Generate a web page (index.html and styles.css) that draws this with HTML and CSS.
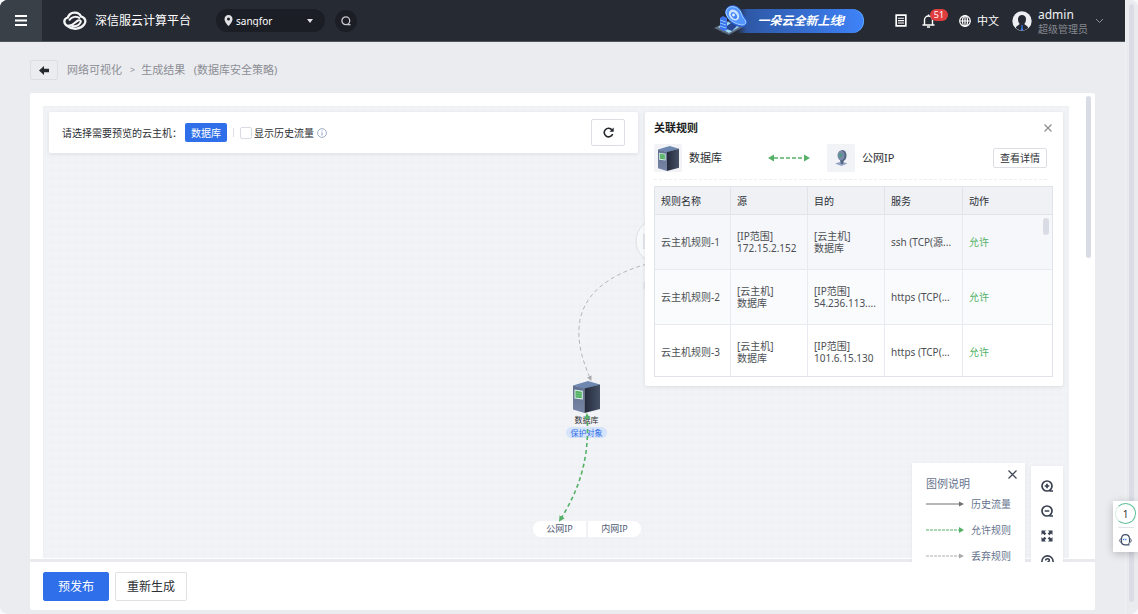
FILE: index.html
```html
<!DOCTYPE html>
<html lang="zh-CN">
<head>
<meta charset="utf-8">
<title>深信服云计算平台</title>
<link rel="stylesheet" href="styles.css">
</head>
<body>
<svg class="defs" aria-hidden="true">
  <defs>
    <linearGradient id="side" x1="0" y1="0" x2="1" y2="0"><stop offset="0" stop-color="#232a3b"/><stop offset="1" stop-color="#465166"/></linearGradient>
    <linearGradient id="front" x1="0" y1="0" x2="0" y2="1"><stop offset="0" stop-color="#62708f"/><stop offset="1" stop-color="#7785a6"/></linearGradient>
    <symbol id="server" viewBox="0 0 27 32">
      <path d="M0 4.500 15 0 27 3.500 11.500 8z" fill="#6e87b0"/>
      <path d="M0 4.500 11.500 7.500V32L0 28.500z" fill="url(#front)"/>
      <path d="M11.500 7.500 27 3.500V28L11.500 32z" fill="url(#side)"/>
      <path d="M1.500 8.500 9.800 9.800V18.500L1.500 17.500z" fill="#d9efe4"/>
      <path d="M2.500 9.800 8.800 10.800V17.200L2.500 16.400z" fill="#4fae62"/>
      <path d="M2.500 12l6.300.8M2.500 14.300l6.300.8" stroke="#8bd297" stroke-width=".6"/>
    </symbol>
  </defs>
</svg>
<div class="app">
  <div class="page">
    <header class="topbar">
      <button class="menu" aria-label="菜单"><svg width="12" height="11" viewBox="0 0 12 11"><path d="M0 1h12M0 5.500h12M0 10h12" stroke="#fff" stroke-width="1.900"/></svg></button>
      <div class="brand">
        <svg width="24" height="20" viewBox="0 0 24 20" fill="none">
          <path d="M4.500 15C0 12.500.5 7.500 4.800 6.500 7 .5 15.500 0 18 5.500c4.500 1 5.500 5 3 8.200C18 18 10 19.500 4.500 15z" stroke="#f4f5f7" stroke-width="2.300"/>
          <path d="M5 14.500c5 1 7-3.500 10-5 2-1 3.500.5 2.500 2-2 3.500-6 4-9 3.500M6 9.500c3-4.500 8-4.500 11-2" stroke="#f4f5f7" stroke-width="2"/>
        </svg>
        <span>深信服云计算平台</span>
      </div>
      <div class="region">
        <svg width="9" height="11" viewBox="0 0 9 11"><path d="M4.500 0A4 4 0 0 0 .5 4.200C.5 7 4.500 11 4.500 11s4-4 4-6.800A4 4 0 0 0 4.500 0zm0 2.600a1.500 1.500 0 1 1 0 3 1.500 1.500 0 0 1 0-3z" fill="#dfe1e4" fill-rule="evenodd"/></svg>
        <select aria-label="区域"><option>sangfor</option></select>
        <svg width="6" height="4" viewBox="0 0 6 4"><path d="M0 0h6L3 4z" fill="#dfe1e4"/></svg>
      </div>
      <button class="search" aria-label="搜索"><svg width="10" height="10" viewBox="0 0 10 10" fill="none" stroke="#c9cbcf" stroke-width="1.300"><circle cx="4.800" cy="4.800" r="3.900"/><path d="M6.500 8.700h3"/></svg></button>
      <a class="banner" href="#">
        <svg width="34" height="31" viewBox="0 0 34 31">
          <path d="M0 23 14 16l15 6-14 8z" fill="#5c6b80"/><path d="M4 22 14 17l11 5-10 6z" fill="#9edcf5"/>
          <path d="M10 23l11-8 6 2-9 9z" fill="#284894"/>
          <path d="M6 13l3-2 4 2v12l-3 1-4-2z" fill="#3d73ed"/><path d="M6 15l6 2M6 18l6 2M6 21l6 2" stroke="#8bc4fb"/>
          <path d="M11 8C11 1 19-2 24 2c4 3 4 8 8 11 2 3 1 8-2 9-7 1-16-5-19-14z" fill="#2b63dd"/>
          <path d="M12 8c0-6 6-8 11-5 5 3 4 8 8 12 2 3 0 5-3 5-8-1-15-6-16-12z" fill="#5595ff" stroke="#a5d4ff"/>
          <ellipse cx="20" cy="10" rx="4.500" ry="6" fill="#cfe5ff" transform="rotate(-40 20 10)"/><ellipse cx="20" cy="10.500" rx="2.500" ry="3.800" fill="#4384f6" transform="rotate(-40 20 10.500)"/><circle cx="19.500" cy="10" r="1.400" fill="#e8f4ff"/>
        </svg>
        <span>一朵云全新上线!</span>
      </a>
      <button class="plain" aria-label="任务"><svg width="12" height="13" viewBox="0 0 12 13" fill="none" stroke="#fff"><path d="M1.200 1.200h9.600v10.600H1.200z" stroke-width="1.700"/><path d="M3 4.200h6M3 6.600h6M3 9h6" stroke-width="1.100"/></svg></button>
      <button class="plain bell" aria-label="通知"><svg width="13" height="14" viewBox="0 0 13 14" fill="none" stroke="#fff" stroke-width="1.400"><path d="M.5 11h12M2.500 11V6a4 4 0 0 1 8 0v5M6.500 2V.5M5 13h3"/></svg><span class="badge">51</span></button>
      <button class="plain lang"><svg width="12" height="12" viewBox="0 0 12 12" fill="none" stroke="#fff" stroke-width="1.200"><circle cx="6" cy="6" r="5.300"/><ellipse cx="6" cy="6" rx="2.500" ry="5.300"/><path d="M.7 6h10.600M6 .7v10.600"/></svg>中文</button>
      <button class="plain user">
        <svg width="20" height="20" viewBox="0 0 20 20"><circle cx="10" cy="10" r="9.700" fill="#edeff2"/><path d="M6 8c0-5.500 8-5.500 8 0 0 2.500-.7 4-1.800 5l3.300 2.500c1 .8.500 1.800-.5 2.400-3 1.800-7 1.800-10 0-1-.6-1.500-1.600-.5-2.400L7.800 13C6.700 12 6 10.500 6 8z" fill="#252a35"/><path d="M9.200 14h1.600l-.4 1.500.8 4H8.800l.8-4z" fill="#377cf5"/></svg>
        <span class="who"><b>admin</b><span>超级管理员</span></span>
        <svg width="9" height="6" viewBox="0 0 9 6"><path d="M1 1l3.500 3.500L8 1" fill="none" stroke="#8d9197"/></svg>
      </button>
    </header>

    <nav class="crumbs">
      <button class="back" aria-label="返回"><svg width="11" height="9" viewBox="0 0 11 9"><path d="M0 4.500 5 0v2.700h5v3.600H5V9z" fill="#25282c"/></svg></button>
      <a href="#">网络可视化</a><i>&gt;</i><span>生成结果&nbsp;&nbsp; (数据库安全策略)</span>
    </nav>

    <main class="work">
      <section class="canvas">
        <svg class="edges" aria-hidden="true">
          <defs>
            <marker id="g" viewBox="0 0 6 6" refX="4" refY="3" markerWidth="6" markerHeight="6" markerUnits="userSpaceOnUse" orient="auto-start-reverse"><path d="M0 0l6 3-6 3z" fill="#55b168"/></marker>
            <marker id="s" viewBox="0 0 5 5" refX="4" refY="2.500" markerWidth="5" markerHeight="5" markerUnits="userSpaceOnUse" orient="auto-start-reverse"><path d="M0 0l5 2.500L0 5z" fill="#a9abb0"/></marker>
          </defs>
          <circle cx="615" cy="135" r="22" fill="#f8f9fb" stroke="#dddfe4"/>
          <path d="M601 128v15M601 176v7" stroke="#e3e5ea" stroke-width="2"/>
          <path d="M604 158C526 180 527 228 548 274" fill="none" stroke="#b4b6bb" stroke-dasharray="4 3" marker-end="url(#s)"/>
        </svg>
        <div class="node">
          <svg width="27" height="32"><use href="#server"/></svg>
          <span>数据库</span><em>保护对象</em>
        </div>
        <div class="ends"><span>公网IP</span><span>内网IP</span></div>
        <svg class="edges" aria-hidden="true"><path d="M544 309C547 350 537 383 517 414" fill="none" stroke="#55b168" stroke-width="1.600" stroke-dasharray="4 3" marker-start="url(#g)" marker-end="url(#g)"/></svg>

        <div class="filter">
          <span>请选择需要预览的云主机：</span>
          <button class="tag">数据库</button>
          <i class="rule"></i>
          <input type="checkbox" id="history"><label for="history">显示历史流量</label>
          <svg width="10" height="10" viewBox="0 0 10 10" fill="none" stroke="#a1adc5"><circle cx="5" cy="5" r="4.400"/><path d="M5 4.200v3.300M5 2.200v1.100" stroke-width="1.200"/></svg>
          <button class="refresh" aria-label="刷新"><svg width="11" height="11" viewBox="0 0 11 11" fill="none" stroke="#24272c" stroke-width="1.600"><path d="M9 3A4.300 4.300 0 1 0 9.600 7"/><path d="M10.700.5v4.200H6.500z" fill="#24272c" stroke="none"/></svg></button>
        </div>

        <aside class="panel">
          <div class="panel-head"><h2>关联规则</h2><button class="plain" aria-label="关闭"><svg width="8" height="8" viewBox="0 0 8 8"><path d="M.5.5l7 7M7.500.5l-7 7" stroke="#8b8e94" stroke-width="1.200"/></svg></button></div>
          <div class="pair">
            <span class="thumb"><svg width="21" height="25"><use href="#server"/></svg></span><span class="from">数据库</span>
            <svg class="arrow" width="42" height="8" viewBox="0 0 42 8"><path d="M6 4h30" stroke="#55b168" stroke-width="1.300" stroke-dasharray="4 2"/><path d="M0 4l6-3.500v7zM42 4l-6-3.500v7z" fill="#55b168"/></svg>
            <span class="thumb"><svg width="13" height="16" viewBox="0 0 13 16"><path d="M0 13.500l6.500-2 6 2-6 2.500z" fill="#93a4c4"/><ellipse cx="7.500" cy="5.500" rx="4" ry="5.500" fill="#566784"/><path d="M5 10h4l-1 4H6z" fill="#566784"/><ellipse cx="6" cy="5.500" rx="3.500" ry="4.800" fill="#798ba9"/><circle cx="5.500" cy="5.200" r="1.800" fill="#4d9b83"/></svg></span><span>公网IP</span>
            <button class="detail">查看详情</button>
          </div>
          <div class="grid-wrap">
            <table>
              <colgroup><col class="c1"><col class="c2"><col class="c2"><col class="c3"><col></colgroup>
              <thead><tr><th>规则名称</th><th>源</th><th>目的</th><th>服务</th><th>动作</th></tr></thead>
              <tbody>
                <tr class="hover"><td>云主机规则-1</td><td>[IP范围]<br>172.15.2.152</td><td>[云主机]<br>数据库</td><td>ssh (TCP(源...</td><td class="ok">允许</td></tr>
                <tr class="alt"><td>云主机规则-2</td><td>[云主机]<br>数据库</td><td>[IP范围]<br>54.236.113....</td><td>https (TCP(...</td><td class="ok">允许</td></tr>
                <tr><td>云主机规则-3</td><td>[云主机]<br>数据库</td><td>[IP范围]<br>101.6.15.130</td><td>https (TCP(...</td><td class="ok">允许</td></tr>
              </tbody>
            </table>
            <i class="thumb-bar"></i>
          </div>
        </aside>
      </section>

      <div class="corner">
        <section class="legend">
          <header><h3>图例说明</h3><button class="plain" aria-label="关闭图例"><svg width="9" height="9" viewBox="0 0 9 9"><path d="M.5.5l8 8M8.500.5l-8 8" stroke="#3f4654" stroke-width="1.200"/></svg></button></header>
          <p><svg width="38" height="6" viewBox="0 0 38 6"><path d="M0 3h34" stroke="#6d7075"/><path d="M33 .5 38 3l-5 2.500z" fill="#6d7075"/></svg>历史流量</p>
          <p><svg width="38" height="6" viewBox="0 0 38 6"><path d="M0 3h33" stroke="#55b168" stroke-dasharray="3 1"/><path d="M33 0 38 3l-5 3z" fill="#55b168"/></svg>允许规则</p>
          <p><svg width="38" height="6" viewBox="0 0 38 6"><path d="M0 3h33" stroke="#aaacb0" stroke-dasharray="3 1"/><path d="M33 .5 38 3l-5 2.500z" fill="#aaacb0"/></svg>丢弃规则</p>
        </section>
        <div class="tools">
          <button class="plain" aria-label="放大"><svg width="12" height="12" viewBox="0 0 12 12" fill="none" stroke="#394150" stroke-width="1.700"><circle cx="6" cy="6" r="5"/><path d="M8.500 11H12M3.700 6h4.600M6 3.700v4.600"/></svg></button>
          <button class="plain" aria-label="缩小"><svg width="12" height="12" viewBox="0 0 12 12" fill="none" stroke="#394150" stroke-width="1.700"><circle cx="6" cy="6" r="5"/><path d="M8.500 11H12M3.700 6h4.600"/></svg></button>
          <button class="plain" aria-label="全屏"><svg width="12" height="12" viewBox="0 0 12 12"><path d="M.5.5H5L3.600 1.900 5.300 3.600 3.600 5.300 1.900 3.600.5 5zM11.500.5V5l-1.400-1.400-1.700 1.700-1.700-1.700 1.700-1.700L7 .5zM.5 11.500V7l1.400 1.400 1.700-1.700 1.700 1.700-1.700 1.700L5 11.500zM11.500 11.500H7l1.400-1.400-1.700-1.700 1.700-1.700 1.700 1.700L11.500 7z" fill="#394150"/></svg></button>
          <button class="plain" aria-label="帮助"><svg width="13" height="13" viewBox="0 0 13 13" fill="none" stroke="#394150" stroke-width="1.600"><circle cx="6.500" cy="6.500" r="5.600"/><path d="M4.700 5.500c0-2.500 3.800-2.300 3.600 0C8.200 6.800 6.500 6.600 6.500 8"/></svg></button>
        </div>
      </div>
      <i class="inner-scroll"></i>
    </main>

    <footer class="actions"><button class="primary">预发布</button><button>重新生成</button></footer>
  </div>
  <div class="outer-scroll"><i></i></div>
  <div class="assist">
    <button class="ring">1</button>
    <button class="plain" aria-label="客服"><svg width="13" height="12" viewBox="0 0 13 12" fill="none" stroke="#42506b"><path d="M2.500 4.500C3-.7 10-.7 10.500 4.500M2.500 4.500v4M10.500 4.500v4M2.500 8.500C3 10 4 10.800 6 10.800h4.500" stroke-width="1.200"/><path d="M2.500 4.500C.2 4.500.2 8.500 2.500 8.500M10.500 4.500c2.300 0 2.300 4 0 4M10.500 8.500 9 10.800"/><path d="M4 5.500h1.300M6.200 5.500h1.300" stroke="#3c7bf0" stroke-width="1.600"/></svg></button>
  </div>
</div>
</body>
</html>
```

FILE: styles.css
```css
* { box-sizing: border-box; }
body {
  margin: 0;
  background: #f8f9fa;
  color: #2d3035;
  font: 10px/12px "Noto Sans", "Noto Sans CJK SC", sans-serif;
}
svg { display: block; flex: none; }
button, input, select { font: inherit; color: inherit; margin: 0; }
button { padding: 0; border: 0; background: none; white-space: nowrap; }
a { color: inherit; text-decoration: none; }
h2, h3, p { margin: 0; }
.defs { position: absolute; width: 0; height: 0; }
.app {
  position: relative;
  display: flex;
  height: 100vh;
  overflow: hidden;
  border-radius: 8px;
  background: #ebecf0;
}
.page { flex: 1; min-width: 0; display: flex; flex-direction: column; }
.plain { display: flex; align-items: center; justify-content: center; }

.topbar {
  flex: none;
  display: flex;
  align-items: center;
  height: 42px;
  padding-right: 21px;
  background: #262a33;
  border-bottom: 1px solid #50545b;
  color: #fff;
}
.menu { display: flex; align-items: center; justify-content: center; width: 42px; align-self: stretch; background: #3a4047; }
.brand { display: flex; align-items: center; gap: 8px; margin-left: 21px; font-size: 12px; white-space: nowrap; }
.region {
  display: flex;
  align-items: center;
  gap: 3px;
  width: 109px;
  height: 23px;
  margin-left: 25px;
  padding: 0 12px 0 8px;
  border-radius: 12px;
  background: #1b1e25;
}
.region select { flex: 1; min-width: 0; height: 20px; padding: 0; border: 0; background: none; appearance: none; color: #fff; }
.search { display: flex; align-items: center; justify-content: center; width: 22px; height: 22px; margin-left: 10px; border-radius: 50%; background: #1b1e25; }
.banner {
  display: flex;
  align-items: center;
  height: 24px;
  margin-left: auto;
  margin-right: 31px;
  padding-right: 19px;
  border-radius: 12px;
  background: linear-gradient(90deg, #262a33 15%, #2e58a6 22%, #3e83fa);
  box-shadow: inset -1px 0 0 #59a5fa;
  font-size: 12px;
  font-weight: 700;
  font-style: italic;
  white-space: nowrap;
}
.banner svg { margin-right: 10px; }
.bell { position: relative; margin-left: 15px; }
.badge { position: absolute; left: 8px; top: -5px; width: 18px; height: 12px; border-radius: 6px; background: #e03d3f; font-size: 9px; text-align: center; }
.lang { gap: 6px; margin-left: 24px; font-size: 11px; }
.user { gap: 6px; margin-left: 13px; text-align: left; }
.who { display: flex; flex-direction: column; margin-right: 1px; padding-top: 2px; line-height: 14px; color: #85888e; }
.who b { font-size: 12px; font-weight: 400; color: #f0f1f3; }

.crumbs { flex: none; display: flex; align-items: center; height: 51px; padding: 5px 0 0 30px; color: #8b8e94; font-size: 11px; }
.crumbs i { margin: 0 6px 0 8px; font-style: normal; font-size: 9px; }
.back { display: flex; align-items: center; justify-content: center; width: 28px; height: 20px; margin-right: 9px; border: 1px solid #dbdde2; border-radius: 2px; }

.work {
  position: relative;
  flex: 1;
  min-height: 0;
  overflow: hidden;
  display: flex;
  margin: 0 30px 0 30px;
  padding: 13px 26px 4px 13px;
  border-radius: 2px 2px 0 0;
  background: linear-gradient(#fff, #fff) top / 100% calc(100% - 3px) no-repeat, #e8eaee;
}
.canvas {
  position: relative;
  flex: 1;
  min-width: 0;
  overflow: hidden;
  display: flex;
  align-items: flex-start;
  gap: 7px;
  padding: 6px;
  background: linear-gradient(#eff0f4 1px, transparent 1px) 0 0 / 8px 8px, linear-gradient(90deg, #eff0f4 1px, #f2f3f7 1px) 0 0 / 8px 8px;
}
.edges { position: absolute; left: 0; top: 0; width: 100%; height: 100%; }
.node { position: absolute; left: 523px; top: 275px; display: flex; flex-direction: column; align-items: center; width: 41px; font-size: 8px; }
.node span { margin: 1px 0; }
.node em { width: 41px; border-radius: 6px; background: #d5e4fb; color: #2f6fe9; font-style: normal; line-height: 11px; text-align: center; }
.ends { position: absolute; left: 490px; top: 415px; display: flex; gap: 2px; color: #535d75; font-size: 9px; line-height: 16px; text-align: center; }
.ends span { width: 53px; background: #fff; border-radius: 8px 0 0 8px; }
.ends span + span { border-radius: 0 8px 8px 0; }

.filter {
  position: relative;
  flex: 1;
  display: flex;
  align-items: center;
  height: 41px;
  padding: 0 13px 0 13px;
  background: #fff;
  border-radius: 2px;
  box-shadow: 0 1px 4px #00000014;
  white-space: nowrap;
}
.tag { height: 19px; padding: 0 6px; margin-left: 3px; border-radius: 2px; background: #2f6fe9; color: #fff; }
.rule { width: 1px; height: 9px; margin: 0 6px; background: #dcdfe5; }
.filter input { width: 12px; height: 12px; margin-right: 2px; appearance: none; border: 1px solid #d8dbe2; border-radius: 2px; background: #fff; }
.filter label { margin-right: 3px; }
.refresh { display: flex; align-items: center; justify-content: center; width: 34px; height: 27px; margin-left: auto; border: 1px solid #dcdee3; border-radius: 2px; }

.panel { position: relative; width: 418px; padding: 9px 10px 9px 9px; background: #fff; border-radius: 2px; box-shadow: 0 1px 4px #00000014; }
.panel-head { display: flex; align-items: center; justify-content: space-between; height: 14px; }
.panel-head h2 { font-size: 11px; color: #1c1e22; }
.panel-head button { width: 10px; }
.pair { display: flex; align-items: center; height: 45px; margin-right: 6px; padding-top: 2px; border-bottom: 1px dashed #eceef2; font-size: 11px; }
.thumb { display: flex; align-items: center; justify-content: center; width: 28px; height: 28px; margin-right: 7px; background: #f1f3f7; border-radius: 2px; }
.from { width: 79px; }
.arrow { margin-right: 17px; }
.detail { height: 20px; margin-left: auto; padding: 0 6px; border: 1px solid #dcdee3; border-radius: 2px; font-size: 10px; }
.grid-wrap { position: relative; max-height: 191px; margin-top: 6px; overflow: hidden; border: 1px solid #e0e3e9; }
table { width: 100%; table-layout: fixed; border-collapse: separate; border-spacing: 0; }
.c1 { width: 76px; }
.c2 { width: 77px; }
.c3 { width: 78px; }
th, td { padding: 0 0 0 6px; border-right: 1px solid #e8eaef; border-bottom: 1px solid #e8eaef; text-align: left; white-space: nowrap; }
th { height: 28px; background: #eff1f5; border-color: #e0e3e9; font-weight: 400; }
td { height: 55px; color: #4c4f54; }
th:last-child, td:last-child { border-right: 0; }
.hover { background: #f6f7fa; }
.alt { background: #fafbfd; }
td.ok { color: #51b165; }
.thumb-bar { position: absolute; right: 3px; top: 31px; width: 6px; height: 17px; border-radius: 3px; background: #d9dce4; }

.corner { position: absolute; right: 32px; bottom: 0; display: flex; align-items: flex-end; gap: 6px; }
.legend { width: 113px; padding: 7px 8px 0 14px; background: #fff; box-shadow: 0 1px 4px #00000010; color: #66738e; }
.legend header { display: flex; justify-content: space-between; align-items: flex-start; height: 28px; }
.legend h3 { font-size: 11px; font-weight: 400; line-height: 28px; }
.legend button { height: 9px; }
.legend p { display: flex; align-items: center; gap: 7px; height: 12px; }
.legend p + p { margin-top: 14px; }
.tools { display: flex; flex-direction: column; align-items: center; gap: 13px; width: 32px; height: 96px; padding-top: 14px; overflow: hidden; background: #fff; box-shadow: 0 1px 4px #00000010; }
.tools button { flex: none; }
.inner-scroll { position: absolute; right: 4px; top: 3px; width: 5px; height: 162px; border-radius: 3px; background: #d9dce4; }

.actions { flex: none; display: flex; align-items: center; gap: 6px; height: 48px; margin: 0 30px 4px; padding: 0 13px; background: #fff; border-radius: 0 0 2px 2px; font-size: 12px; }
.actions button { height: 29px; padding: 2px 11px 0; border: 1px solid #dfe1e5; border-radius: 2px; }
.actions .primary { padding: 2px 14px 0; border-color: #2f6fe9; background: #2f6fe9; color: #fff; }

.outer-scroll { width: 13px; padding: 4px 4px 12px 3px; border-left: 1px solid #f0f1f3; background: #e9ebee; }
.outer-scroll i { display: block; height: 100%; border-radius: 3px; background: #dadde5; }
.assist { position: absolute; right: 0; bottom: 62px; display: flex; flex-direction: column; align-items: center; gap: 3px; width: 25px; padding: 2px 0 6px; background: #fff; box-shadow: 0 2px 8px #00000038; }
.ring { width: 21px; height: 21px; border: 1px solid #5fc09a; border-left-color: #d9efe5; border-radius: 50%; }
.assist .plain { width: 16px; padding-top: 6px; border-top: 1px solid #e1e3e8; }
```
